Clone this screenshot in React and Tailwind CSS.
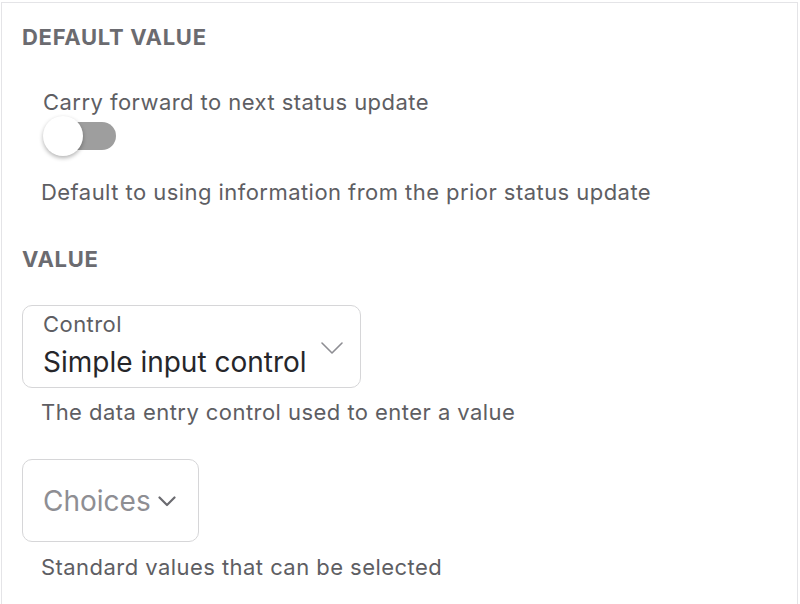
import React from "react";

function Toggle() {
    return (
        <div className="relative w-[74px] h-[40px] flex items-center">
            <div className="ml-[8px] w-[65px] h-[28px] rounded-full bg-[#9e9e9e]" />
            <div className="absolute left-0 top-0 w-[40px] h-[40px] rounded-full bg-white shadow-[0_2px_4px_rgba(0,0,0,0.3)]" />
        </div>
    );
}

const body = "text-[22px] leading-[28px] tracking-[0.45px] text-[#5e5e63]";
const heading = "text-[22px] leading-[28px] font-bold tracking-[0.7px] text-[#6b6b70]";

export default function App() {
    return (
        <div className="w-[800px] h-[604px] overflow-hidden bg-white pt-[2px] pl-px pr-[2px] font-['Inter',sans-serif]">
            <div className="border border-[#e4e4e7] h-[640px] pl-[20px] pt-[20px]">
                <h2 className={heading}>DEFAULT VALUE</h2>

                <div className="pl-[21px] mt-[37px]">
                    <div className={body}>Carry forward to next status update</div>
                    <Toggle />
                </div>
                <p className={`pl-[19px] mt-[22px] ${body}`}>Default to using information from the prior status update</p>

                <h2 className={`mt-[39px] ${heading}`}>VALUE</h2>

                <div className="mt-[32px] w-[339px] h-[83px] rounded-[10px] border border-[#d6d6d8] pl-[20px] pr-[17px] pt-[4px] flex justify-between">
                    <div>
                        <div className={body}>Control</div>
                        <div className="mt-[7px] text-[28px] leading-[34px] text-[#26262a]">Simple input control</div>
                    </div>
                    <svg viewBox="0 0 22 12" className="w-[22px] h-[12px] mt-[32px] text-[#8e8e93]" fill="none" stroke="currentColor" strokeWidth="1.6" strokeLinecap="round" strokeLinejoin="round">
                        <path d="M1 1l10 10 10-10" />
                    </svg>
                </div>
                <p className={`pl-[19px] mt-[10px] ${body}`}>The data entry control used to enter a value</p>

                <div className="mt-[33px] w-[177px] h-[83px] rounded-[10px] border border-[#d6d6d8] pl-[20px] pt-[1px] flex items-center gap-[7px]">
                    <span className="text-[28px] leading-[34px] text-[#8e8e93]">Choices</span>
                    <svg viewBox="0 0 18 11" className="w-[18px] h-[11px] text-[#6b6b70]" fill="none" stroke="currentColor" strokeWidth="2.2" strokeLinecap="round" strokeLinejoin="round">
                        <path d="M1.5 1.5l7.5 7.5 7.5-7.5" />
                    </svg>
                </div>
                <p className={`pl-[19px] mt-[11px] ${body}`}>Standard values that can be selected</p>
            </div>
        </div>
    );
}
